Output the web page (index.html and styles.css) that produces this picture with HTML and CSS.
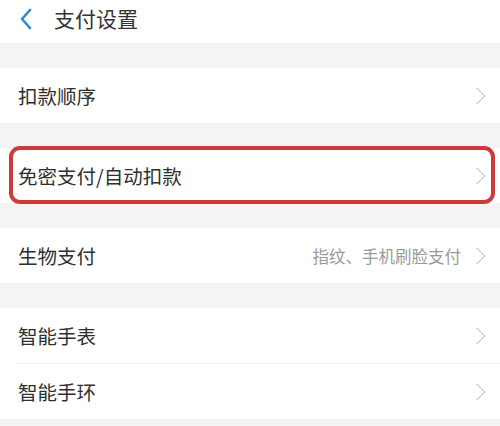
FILE: index.html
```html
<!DOCTYPE html>
<html lang="zh-CN">
<head>
<meta charset="UTF-8" />
<meta name="viewport" content="width=device-width, initial-scale=1" />
<title>支付设置</title>
<link rel="stylesheet" href="styles.css">
</head>
<body>
  <div class="header">
    <svg class="back" width="14" height="22" viewBox="0 0 14 22">
      <path d="M11 2 L3 11 L11 20" fill="none" stroke="#2b8ad0" stroke-width="2.6" stroke-linecap="round" stroke-linejoin="round"/>
    </svg>
    <span class="title">支付设置</span>
  </div>

  <div class="group">
    <div class="row">
      <span class="label">扣款顺序</span>
      <span class="arrow"></span>
    </div>
  </div>

  <div class="group">
    <div class="row marked">
      <span class="label">免密支付/自动扣款</span>
      <span class="arrow"></span>
    </div>
  </div>

  <div class="group">
    <div class="row">
      <span class="label">生物支付</span>
      <span class="value">指纹、手机刷脸支付</span>
      <span class="arrow"></span>
    </div>
  </div>

  <div class="group">
    <div class="row">
      <span class="label">智能手表</span>
      <span class="arrow"></span>
    </div>
    <div class="divider"></div>
    <div class="row">
      <span class="label">智能手环</span>
      <span class="arrow"></span>
    </div>
  </div>
</body>
</html>
```

FILE: styles.css
```css
body {
  margin: 0;
  background: #f4f4f4;
  font-family: 'Noto Sans CJK SC', 'Noto Sans', sans-serif;
  color: #333;
  height: 426px;
  overflow: hidden;
}
.header {
  height: 43px;
  background: #fff;
  display: flex;
  align-items: center;
  padding-left: 19px;
}
.back {
  margin-right: 21px;
  margin-top: -6px;
}
.title {
  font-size: 21px;
  color: #333;
  margin-top: -7px;
}
.group {
  margin-top: 25px;
  background: #fff;
}
.row {
  position: relative;
  height: 55px;
  display: flex;
  align-items: center;
  padding: 0 13px 0 18px;
}
.divider {
  height: 1px;
  margin-left: 18px;
  background: #efefef;
}
.label {
  font-size: 19.5px;
  flex: 1;
  color: #2f2f2f;
}
.value {
  font-size: 16.5px;
  color: #9a9a9a;
  margin-right: 10px;
}
.arrow {
  width: 11px;
  height: 11px;
  border-top: 1.5px solid #c6c6c6;
  border-right: 1.5px solid #c6c6c6;
  transform: rotate(45deg);
  margin-right: 4px;
}
.marked::after {
  content: "";
  position: absolute;
  left: 9px;
  right: 5px;
  top: -2px;
  bottom: -1px;
  border: 4px solid #cc3a3c;
  border-radius: 11px;
}
```
